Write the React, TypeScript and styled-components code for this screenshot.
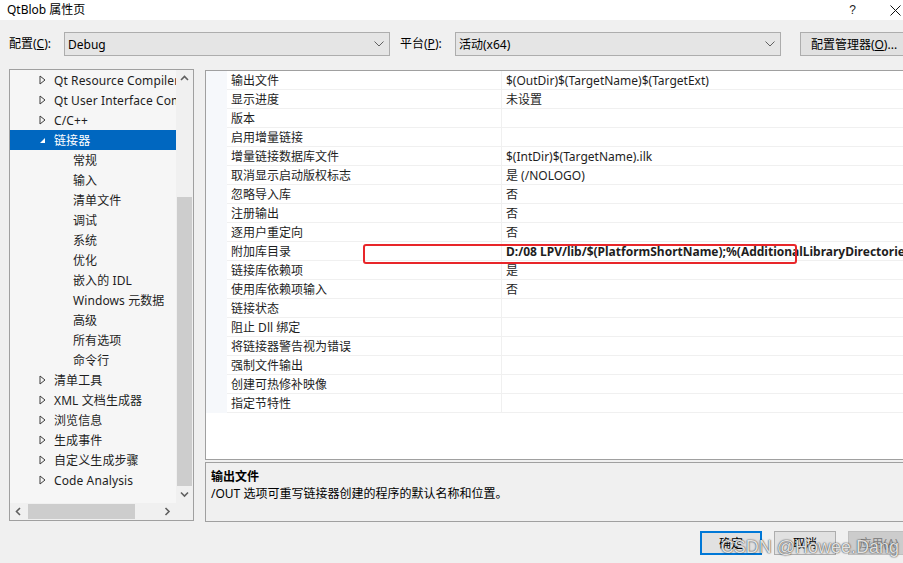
import React from "react";
import styled, { createGlobalStyle } from "styled-components";

const Global = createGlobalStyle`
  html, body { margin: 0; padding: 0; background: #f0f0f0; }
  body {
    font-family: "Noto Sans", "Noto Sans CJK SC", sans-serif;
    font-size: 12px;
    color: #000;
  }
  * { box-sizing: border-box; }
`;

const Window = styled.div`
  width: 903px;
  height: 563px;
  background: #f0f0f0;
  position: relative;
  overflow: hidden;
  display: flex;
  flex-direction: column;
`;

const TitleBar = styled.div`
  height: 20px;
  flex-shrink: 0;
  background: #fff;
  display: flex;
  align-items: center;
  padding-left: 7px;
  padding-right: 2px;
`;

const Title = styled.div`
  flex: 1;
  line-height: 20px;
`;

const TitleControls = styled.div`
  display: flex;
  align-items: center;
  gap: 34px;
`;

const HelpGlyph = styled.span`
  font-family: "Liberation Sans", sans-serif;
  font-size: 12px;
  color: #222;
`;

const ConfigRow = styled.div`
  margin-top: 12px;
  height: 24px;
  flex-shrink: 0;
  display: flex;
  align-items: center;
  padding-left: 9px;
`;

const Label = styled.div<{ $ml?: number }>`
  width: 55px;
  flex-shrink: 0;
  margin-left: ${(p) => p.$ml ?? 0}px;
  line-height: 24px;
`;

const Combo = styled.div`
  width: 326px;
  height: 24px;
  flex-shrink: 0;
  background: #e5e5e5;
  border: 1px solid #adadad;
  display: flex;
  align-items: center;
  padding: 0 5px 0 3px;
`;

const ComboText = styled.span`
  flex: 1;
`;

const PushButton = styled.div<{ $w: number; $variant?: "default" | "normal" | "disabled"; $ml?: number; $mr?: number }>`
  width: ${(p) => p.$w}px;
  height: 24px;
  flex-shrink: 0;
  margin-left: ${(p) => p.$ml ?? 0}px;
  margin-right: ${(p) => p.$mr ?? 0}px;
  display: flex;
  align-items: center;
  justify-content: center;
  background: ${(p) => (p.$variant === "disabled" ? "#cccccc" : "#e1e1e1")};
  border: ${(p) =>
    p.$variant === "default"
      ? "2px solid #0078d7"
      : p.$variant === "disabled"
      ? "1px solid #bfbfbf"
      : "1px solid #adadad"};
  color: ${(p) => (p.$variant === "disabled" ? "#838383" : "#000")};
`;

const Main = styled.div`
  margin-top: 13px;
  height: 453px;
  flex-shrink: 0;
  display: flex;
  padding-left: 9px;
`;

/* ---------- tree ---------- */

const Tree = styled.div`
  width: 185px;
  height: 452px;
  flex-shrink: 0;
  border: 1px solid #a0a0a0;
  display: grid;
  grid-template-columns: 1fr 17px;
  grid-template-rows: 1fr 17px;
`;

const TreeContent = styled.div`
  background: #f6f6f6;
  overflow: hidden;
  display: flex;
  flex-direction: column;
`;

const TreeRow = styled.div<{ $level: number; $selected?: boolean }>`
  height: 20px;
  flex-shrink: 0;
  display: flex;
  align-items: center;
  white-space: nowrap;
  padding-left: ${(p) => (p.$level === 1 ? 29 : 63)}px;
  background: ${(p) => (p.$selected ? "#0067c0" : "transparent")};
  color: ${(p) => (p.$selected ? "#fff" : "#1e1e1e")};
  letter-spacing: 0.1px;
`;

const Expander = styled.span`
  width: 15px;
  flex-shrink: 0;
  display: flex;
  align-items: center;
`;

const VScroll = styled.div`
  background: #f0f0f0;
  display: flex;
  flex-direction: column;
`;

const HScroll = styled.div`
  background: #f0f0f0;
  display: flex;
`;

const Corner = styled.div`
  background: #f0f0f0;
`;

const ArrowBox = styled.div`
  width: 17px;
  height: 17px;
  flex-shrink: 0;
  display: flex;
  align-items: center;
  justify-content: center;
`;

const Track = styled.div<{ $dir: "v" | "h" }>`
  flex: 1;
  display: flex;
  flex-direction: ${(p) => (p.$dir === "v" ? "column" : "row")};
`;

const TrackGap = styled.div<{ $size: number }>`
  flex: 0 0 ${(p) => p.$size}px;
`;

const Thumb = styled.div<{ $dir: "v" | "h"; $size?: number }>`
  background: #cdcdcd;
  ${(p) =>
    p.$dir === "v"
      ? `flex: 1; margin: 0 1px;`
      : `flex: 0 0 ${p.$size}px; margin: 1px 0;`}
`;

/* ---------- right side ---------- */

const RightCol = styled.div`
  width: 710px;
  flex-shrink: 0;
  margin-left: 11px;
  display: flex;
  flex-direction: column;
`;

const Grid = styled.div`
  position: relative;
  margin-top: 1px;
  height: 391px;
  border: 1px solid #a0a0a0;
  background: #fff;
  display: flex;
  flex-direction: column;
`;

const PropRow = styled.div`
  height: 19px;
  flex-shrink: 0;
  display: flex;
`;

const Gutter = styled.div`
  width: 21px;
  flex-shrink: 0;
  background: #f6f8fb;
`;

const PropName = styled.div`
  width: 275px;
  height: 19px;
  flex-shrink: 0;
  padding: 2px 0 0 4px;
  line-height: 16px;
  border-bottom: 1px solid #f0f0f0;
  border-right: 1px solid #f0f0f0;
  white-space: nowrap;
  color: #1e1e1e;
`;

const PropValue = styled.div<{ $bold?: boolean }>`
  flex: 1;
  height: 19px;
  padding: 2px 0 0 4px;
  line-height: 16px;
  border-bottom: 1px solid #f0f0f0;
  white-space: nowrap;
  overflow: hidden;
  font-weight: ${(p) => (p.$bold ? 700 : 400)};
  color: #1e1e1e;
`;

const Highlight = styled.div`
  position: absolute;
  left: 157px;
  top: 173px;
  width: 434px;
  height: 20px;
  border: 2px solid #e8262a;
  border-radius: 3px;
  pointer-events: none;
`;

const Desc = styled.div`
  margin-top: 2px;
  height: 60px;
  border: 1px solid #a0a0a0;
  background: #f0f0f0;
  padding: 5px 5px;
  line-height: 17px;
`;

const DescTitle = styled.div`
  font-weight: 700;
`;

const Footer = styled.div`
  margin-top: 9px;
  height: 24px;
  flex-shrink: 0;
  display: flex;
  justify-content: flex-end;
  gap: 12px;
`;

const Watermark = styled.div`
  position: absolute;
  right: 4px;
  bottom: 5px;
  font-family: "Liberation Sans", sans-serif;
  font-size: 18px;
  color: rgba(255, 255, 255, 0.85);
  text-shadow: 0 0 1px rgba(40, 40, 40, 0.9), 0 0 2px rgba(40, 40, 40, 0.6);
  pointer-events: none;
`;

/* ---------- icons ---------- */

const Chevron = ({ dir }: { dir: "up" | "down" | "left" | "right" }) => {
  const pts: Record<string, string> = {
    down: "1,1.5 4.5,5 8,1.5",
    up: "1,5 4.5,1.5 8,5",
    left: "5,1 1.5,4.5 5,8",
    right: "1.5,1 5,4.5 1.5,8",
  };
  const vertical = dir === "up" || dir === "down";
  return (
    <svg width={vertical ? 9 : 7} height={vertical ? 7 : 9}>
      <polyline points={pts[dir]} fill="none" stroke="#606060" strokeWidth="1.6" />
    </svg>
  );
};

const ComboChevron = () => (
  <svg width="10" height="6">
    <polyline points="0.5,0.5 5,5 9.5,0.5" fill="none" stroke="#606060" strokeWidth="1" />
  </svg>
);

const Collapsed = () => (
  <svg width="7" height="10">
    <polygon points="1,1 6,5 1,9" fill="none" stroke="#3c3c3c" strokeWidth="1" />
  </svg>
);

const ExpandedSel = () => (
  <svg width="7" height="10">
    <polygon points="6,3 6,8 1,8" fill="#fff" />
  </svg>
);

const CloseIcon = () => (
  <svg width="11" height="11">
    <path d="M0.5 0.5 L10.5 10.5 M10.5 0.5 L0.5 10.5" stroke="#111" strokeWidth="1" />
  </svg>
);

/* ---------- data ---------- */

type TreeItem = { label: string; level: 1 | 2; expander?: "closed" | "open"; selected?: boolean };

const treeItems: TreeItem[] = [
  { label: "Qt Resource Compiler", level: 1, expander: "closed" },
  { label: "Qt User Interface Compiler", level: 1, expander: "closed" },
  { label: "C/C++", level: 1, expander: "closed" },
  { label: "链接器", level: 1, expander: "open", selected: true },
  { label: "常规", level: 2 },
  { label: "输入", level: 2 },
  { label: "清单文件", level: 2 },
  { label: "调试", level: 2 },
  { label: "系统", level: 2 },
  { label: "优化", level: 2 },
  { label: "嵌入的 IDL", level: 2 },
  { label: "Windows 元数据", level: 2 },
  { label: "高级", level: 2 },
  { label: "所有选项", level: 2 },
  { label: "命令行", level: 2 },
  { label: "清单工具", level: 1, expander: "closed" },
  { label: "XML 文档生成器", level: 1, expander: "closed" },
  { label: "浏览信息", level: 1, expander: "closed" },
  { label: "生成事件", level: 1, expander: "closed" },
  { label: "自定义生成步骤", level: 1, expander: "closed" },
  { label: "Code Analysis", level: 1, expander: "closed" },
];

type Prop = { name: string; value?: string; bold?: boolean };

const props: Prop[] = [
  { name: "输出文件", value: "$(OutDir)$(TargetName)$(TargetExt)" },
  { name: "显示进度", value: "未设置" },
  { name: "版本" },
  { name: "启用增量链接" },
  { name: "增量链接数据库文件", value: "$(IntDir)$(TargetName).ilk" },
  { name: "取消显示启动版权标志", value: "是 (/NOLOGO)" },
  { name: "忽略导入库", value: "否" },
  { name: "注册输出", value: "否" },
  { name: "逐用户重定向", value: "否" },
  {
    name: "附加库目录",
    value: "D:/08 LPV/lib/$(PlatformShortName);%(AdditionalLibraryDirectories)",
    bold: true,
  },
  { name: "链接库依赖项", value: "是" },
  { name: "使用库依赖项输入", value: "否" },
  { name: "链接状态" },
  { name: "阻止 Dll 绑定" },
  { name: "将链接器警告视为错误" },
  { name: "强制文件输出" },
  { name: "创建可热修补映像" },
  { name: "指定节特性" },
];

export default function App() {
  return (
    <Window>
      <Global />
      <TitleBar>
        <Title>QtBlob 属性页</Title>
        <TitleControls>
          <HelpGlyph>?</HelpGlyph>
          <CloseIcon />
        </TitleControls>
      </TitleBar>

      <ConfigRow>
        <Label>
          配置(<u>C</u>):
        </Label>
        <Combo>
          <ComboText>Debug</ComboText>
          <ComboChevron />
        </Combo>
        <Label $ml={10}>
          平台(<u>P</u>):
        </Label>
        <Combo>
          <ComboText>活动(x64)</ComboText>
          <ComboChevron />
        </Combo>
        <PushButton $w={108} $ml={19}>
          配置管理器(<u>O</u>)...
        </PushButton>
      </ConfigRow>

      <Main>
        <Tree>
          <TreeContent>
            {treeItems.map((it) => (
              <TreeRow key={it.label} $level={it.level} $selected={it.selected}>
                {it.expander && (
                  <Expander>{it.expander === "open" ? <ExpandedSel /> : <Collapsed />}</Expander>
                )}
                {it.label}
              </TreeRow>
            ))}
          </TreeContent>
          <VScroll>
            <ArrowBox>
              <Chevron dir="up" />
            </ArrowBox>
            <Track $dir="v">
              <TrackGap $size={110} />
              <Thumb $dir="v" />
            </Track>
            <ArrowBox>
              <Chevron dir="down" />
            </ArrowBox>
          </VScroll>
          <HScroll>
            <ArrowBox>
              <Chevron dir="left" />
            </ArrowBox>
            <Track $dir="h">
              <TrackGap $size={1} />
              <Thumb $dir="h" $size={107} />
            </Track>
            <ArrowBox>
              <Chevron dir="right" />
            </ArrowBox>
          </HScroll>
          <Corner />
        </Tree>

        <RightCol>
          <Grid>
            {props.map((p) => (
              <PropRow key={p.name}>
                <Gutter />
                <PropName>{p.name}</PropName>
                <PropValue $bold={p.bold}>{p.value ?? ""}</PropValue>
              </PropRow>
            ))}
            <Highlight />
          </Grid>
          <Desc>
            <DescTitle>输出文件</DescTitle>
            <div>/OUT 选项可重写链接器创建的程序的默认名称和位置。</div>
          </Desc>
        </RightCol>
      </Main>

      <Footer>
        <PushButton $w={62} $variant="default">
          确定
        </PushButton>
        <PushButton $w={62}>取消</PushButton>
        <PushButton $w={62} $variant="disabled" $mr={-7}>
          应用(A)
        </PushButton>
      </Footer>

      <Watermark>CSDN @Howee.Dang</Watermark>
    </Window>
  );
}
